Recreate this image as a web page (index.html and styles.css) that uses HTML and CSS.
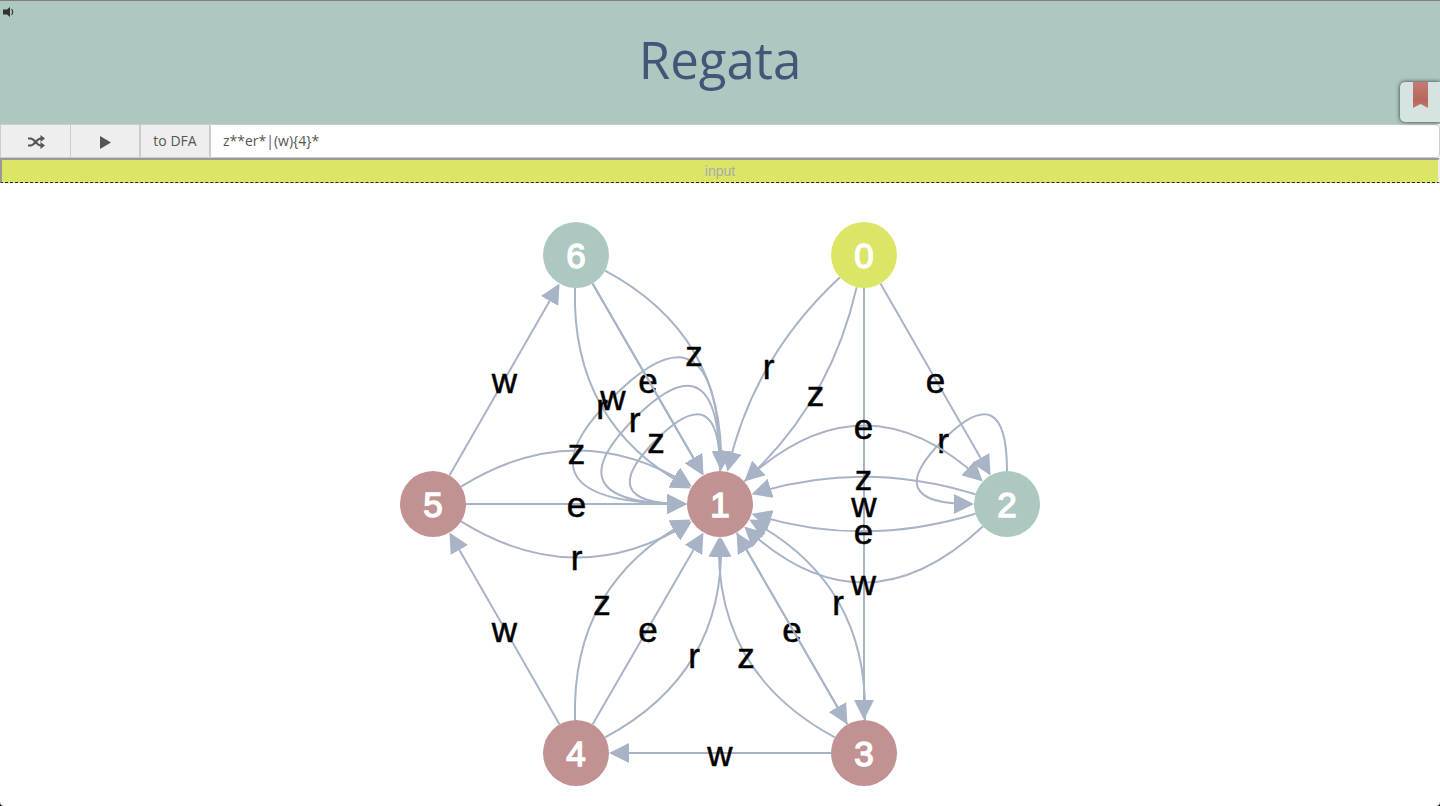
FILE: index.html
```html
<!DOCTYPE html>
<html lang="en">
<head>
<meta charset="utf-8">
<title>Regata</title>
<link rel="stylesheet" href="styles.css">
</head>
<body>
<header class="header">
  <button class="sound" aria-label="Sound">
    <svg width="12" height="10" viewBox="0 0 12 10"><path d="M0 2.500h4l3-2.500v10L4 7.500H0z" fill="#333"/><path d="M8.500 2.200q2.400 2.800 0 5.600" fill="none" stroke="#333" stroke-width="1.100"/></svg>
  </button>
  <h1 class="title">Regata</h1>
  <button class="bookmark" aria-label="Bookmarks">
    <svg width="15" height="26" viewBox="0 0 15 26"><defs><linearGradient id="ribbon" x1="0" y1="0" x2="0" y2="1"><stop offset="0" stop-color="#c77b70"/><stop offset=".7" stop-color="#b36860"/><stop offset="1" stop-color="#cf7466"/></linearGradient></defs><path d="M0 0h15v26l-7.500-4L0 26z" fill="url(#ribbon)"/></svg>
  </button>
</header>
<form class="toolbar">
  <button type="button" class="tool" aria-label="Random">
    <svg width="17" height="14" viewBox="0 0 17 14"><path d="M0 3.500h2.500C7 3.500 8 10.500 13 10.500M0 10.500h2.500C7 10.500 8 3.500 13 3.500" fill="none" stroke="#555" stroke-width="2.200"/><path d="M12.500 0l4.500 3.500-4.500 3.500zM12.500 7l4.500 3.500-4.500 3.500z" fill="#555"/></svg>
  </button>
  <button type="button" class="tool" aria-label="Play">
    <svg width="11" height="13" viewBox="0 0 11 13"><path d="M0 0l11 6.500L0 13z" fill="#555"/></svg>
  </button>
  <button type="button" class="tool">to DFA</button>
  <input class="regex" type="text" aria-label="Regular expression" value="z**er*|(w){4}*">
</form>
<input class="word" type="text" aria-label="Input word" placeholder="input">
<main class="stage">
  <svg class="graph" id="graph" width="660" height="623" viewBox="390 183 660 623" role="img" aria-label="State diagram">
    <defs>
      <marker id="arrow" markerUnits="userSpaceOnUse" markerWidth="20" markerHeight="20" refX="17" refY="10" orient="auto"><path class="arrowhead" d="M0 0L20 10L0 20z"/></marker>
    </defs>
  </svg>
</main>
<script src="graph.js"></script>
</body>
</html>
```
FILE: styles.css
```css
* { box-sizing: border-box; }
html { background: #000; }
body {
  margin: 0;
  min-height: 100vh;
  display: flex;
  flex-direction: column;
  background: #fff;
  border-radius: 0 0 4px 4px;
  overflow-x: hidden;
  font-family: "Open Sans", "Noto Sans", sans-serif;
}
button { font: inherit; padding: 0; cursor: pointer; }
.header {
  position: relative;
  display: flex;
  justify-content: center;
  align-items: center;
  height: 124px;
  border-top: 1px solid #827c82;
  background: #acc8c0;
}
.title {
  margin: 0 0 8px;
  font-size: 51px;
  line-height: 70px;
  font-weight: 400;
  color: #445577;
}
.sound {
  position: absolute;
  left: 3px;
  top: 6px;
  border: 0;
  background: none;
  display: flex;
}
.bookmark {
  position: absolute;
  right: 0;
  bottom: 2px;
  width: 40px;
  height: 40px;
  padding-left: 13px;
  display: flex;
  align-items: flex-start;
  border: 0;
  border-radius: 5px 0 0 5px;
  background: #d5e4e0;
  box-shadow: 0 0 4px #333;
}
.toolbar {
  display: flex;
  height: 34px;
}
.tool {
  flex: 0 0 70px;
  display: flex;
  align-items: center;
  justify-content: center;
  padding-top: 2px;
  border: 1px solid #ccc;
  border-right-width: 0;
  background: #eee;
  color: #555;
  font-size: 14px;
}
.tool:first-child { padding-left: 2px; }
.tool:nth-child(2) { border-right-width: 1px; }
.tool:nth-child(3) { padding: 0 0 1px; border-right-width: 1px; }
.regex {
  flex: 1;
  min-width: 0;
  border: 1px solid #ccc;
  border-radius: 0 4px 4px 0;
  padding: 0 12px 2px;
  color: #555;
  background: #fff;
  font: 14px "Open Sans", "Noto Sans", sans-serif;
}
.word {
  width: 100%;
  height: 25px;
  padding: 0;
  border: 2px solid #999;
  border-right-color: #eee;
  border-bottom: 1px dashed #222;
  border-radius: 0;
  background: #dbe667;
  text-align: center;
  font: 14px "Liberation Sans", sans-serif;
}
.word::placeholder { color: #aaa; opacity: 1; }
.stage {
  flex: 1;
  display: flex;
  justify-content: center;
}
.graph { display: block; flex: none; }
.edge { fill: none; stroke: #a8b4c6; stroke-width: 2; }
.arrowhead { fill: #a8b4c6; }
.label, .name {
  font: 35px "Liberation Sans", Arial, sans-serif;
  text-anchor: middle;
}
.label { fill: #000; stroke: #000; stroke-width: 0.5; }
.name { fill: #fff; stroke: #fff; stroke-width: 1.4; }
.start { fill: #dbe667; }
.accept { fill: #acc8c0; }
.plain { fill: #c29292; }
```
FILE: graph.js
```js
const svg = document.getElementById("graph");
const R = 33, GAP = 36, BEND = 89, BASELINE = 13;

const nodes = {
  0: [864, 255, "start"], 1: [720, 504, "plain"], 2: [1007, 504, "accept"],
  3: [864, 753, "plain"], 4: [576, 753, "plain"], 5: [433, 504, "plain"],
  6: [576, 255, "accept"]
};

// from, to, label, bend (in steps, positive to the left of travel)
const edges = [
  [0, 3, "w", 0], [0, 2, "e", 0], [3, 4, "w", 0], [4, 5, "w", 0], [5, 6, "w", 0],
  [0, 1, "r", -0.5], [0, 1, "z", 0.5],
  [1, 2, "e", 1.5], [2, 1, "z", -0.5], [2, 1, "e", 0.5], [2, 1, "w", 1.5],
  [5, 1, "z", 1], [5, 1, "e", 0], [5, 1, "r", -1],
  [4, 1, "z", 1], [4, 1, "e", 0], [4, 1, "r", -1],
  [3, 1, "z", 1], [3, 1, "e", 0], [3, 1, "r", -1],
  [6, 1, "z", 1], [6, 1, "e", 0], [6, 1, "r", -1],
  [6, 1, "", 0], [1, 3, "", 0]
];

// node, label, reach
const loops = [[1, "z", 128], [1, "r", 171], [1, "w", 214], [2, "r", 128]];

function add(tag, attrs, text) {
  const el = document.createElementNS("http://www.w3.org/2000/svg", tag);
  for (const key in attrs) el.setAttribute(key, attrs[key]);
  if (text) el.textContent = text;
  svg.appendChild(el);
}

function toward(a, b, dist) {
  const len = Math.hypot(b[0] - a[0], b[1] - a[1]);
  return [a[0] + (b[0] - a[0]) * dist / len, a[1] + (b[1] - a[1]) * dist / len];
}

function drawEdge(d, x, y, label) {
  add("path", { class: "edge", d, "marker-end": "url(#arrow)" });
  if (label) add("text", { class: "label", x, y: Math.round(y) + BASELINE }, label);
}

for (const [node, label, reach] of loops) {
  const [x, y] = nodes[node];
  const mx = x - reach / 2, my = y - reach / 2;
  drawEdge(`M${x} ${y - R}Q${x} ${y - reach} ${mx} ${my}Q${x - reach} ${y} ${x - GAP} ${y}`, mx, my, label);
}

for (const [from, to, label, bend] of edges) {
  const a = nodes[from], b = nodes[to];
  const dx = b[0] - a[0], dy = b[1] - a[1], len = Math.hypot(dx, dy);
  const c = [(a[0] + b[0]) / 2 + dy / len * bend * BEND, (a[1] + b[1]) / 2 - dx / len * bend * BEND];
  const s = toward(a, c, R), e = toward(b, c, GAP), t = toward(b, c, R);
  drawEdge(`M${s}Q${c} ${e}`, (s[0] + 2 * c[0] + t[0]) / 4, (s[1] + 2 * c[1] + t[1]) / 4, label);
}

for (const id in nodes) {
  const [x, y, kind] = nodes[id];
  add("circle", { class: kind, cx: x, cy: y, r: R });
  add("text", { class: "name", x, y: y + BASELINE }, id);
}
```
